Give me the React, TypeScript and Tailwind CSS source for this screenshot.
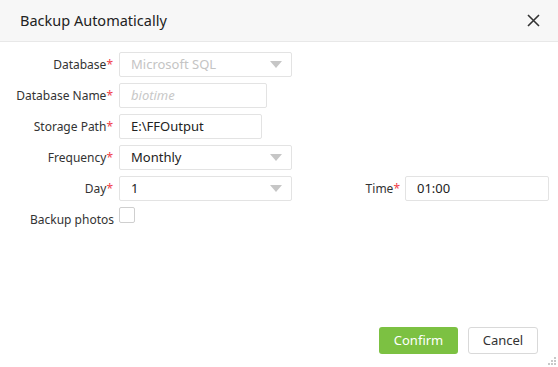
import React from "react";

const FONT = { fontFamily: '"Noto Sans", "Open Sans", Arial, sans-serif' };

function Label({ text, required = true, className = "" }: { text: string; required?: boolean; className?: string }) {
  return (
    <div className={`shrink-0 text-right text-[12px] text-[#333] ${className}`}>
      {text}
      {required && <span className="text-[#f0414a]">*</span>}
    </div>
  );
}

function Caret() {
  return (
    <svg width="12" height="7" viewBox="0 0 12 7" className="shrink-0">
      <path d="M0 0H12L6 7Z" fill="#c6c6c6" />
    </svg>
  );
}

function Select({ value, disabled = false }: { value: string; disabled?: boolean }) {
  return (
    <div className="flex h-[25px] w-[173px] items-center justify-between rounded-[2px] border border-[#e3e3e3] bg-white pl-[11px] pr-[9px]">
      <span className={`text-[13px] ${disabled ? "text-[#c4c4c4]" : "text-[#222]"}`}>{value}</span>
      <Caret />
    </div>
  );
}

function Input({ value, placeholder, width }: { value?: string; placeholder?: string; width: string }) {
  return (
    <div className={`flex h-[25px] ${width} items-center rounded-[2px] border border-[#e3e3e3] bg-white pl-[11px]`}>
      {value ? (
        <span className="text-[13px] text-[#222]">{value}</span>
      ) : (
        <span className="text-[13px] italic text-[#c8c8c8]">{placeholder}</span>
      )}
    </div>
  );
}

export default function App() {
  return (
    <div style={FONT} className="relative flex h-[367px] w-[558px] flex-col bg-white">
      <div className="flex h-[42px] shrink-0 items-center justify-between border-b border-[#e8e8e8] bg-[#f7f7f7] pl-[20px] pr-[18px]">
        <span className="text-[14.5px] text-[#222]">Backup Automatically</span>
        <svg width="13" height="13" viewBox="0 0 13 13">
          <path d="M1 1L12 12M12 1L1 12" stroke="#333" strokeWidth="1.6" />
        </svg>
      </div>

      <div className="flex flex-col gap-[6px] pt-[10px]">
        <div className="flex items-center">
          <Label text="Database" className="w-[119px] pr-[6px]" />
          <Select value="Microsoft SQL" disabled />
        </div>
        <div className="flex items-center">
          <Label text="Database Name" className="w-[119px] pr-[6px]" />
          <Input placeholder="biotime" width="w-[148px]" />
        </div>
        <div className="flex items-center">
          <Label text="Storage Path" className="w-[119px] pr-[6px]" />
          <Input value="E:\FFOutput" width="w-[143px]" />
        </div>
        <div className="flex items-center">
          <Label text="Frequency" className="w-[119px] pr-[6px]" />
          <Select value="Monthly" />
        </div>
        <div className="flex items-center">
          <Label text="Day" className="w-[119px] pr-[6px]" />
          <Select value="1" />
          <Label text="Time" className="w-[113px] pr-[5px]" />
          <Input value="01:00" width="w-[144px]" />
        </div>
        <div className="flex items-start">
          <Label text="Backup photos" required={false} className="w-[119px] pr-[5px] pt-[4px]" />
          <div className="h-[16px] w-[16px] rounded-[2px] border border-[#cfcfcf] bg-white" />
        </div>
      </div>

      <div className="flex-1" />

      <div className="flex justify-end gap-[10px] pb-[13px] pr-[20px]">
        <button className="h-[27px] w-[79px] rounded-[3px] bg-[#7cc142] text-[13px] text-white">Confirm</button>
        <button className="h-[27px] w-[70px] rounded-[3px] border border-[#d9d9d9] bg-white text-[13px] text-[#333]">Cancel</button>
      </div>

      <svg width="9" height="9" viewBox="0 0 9 9" className="absolute bottom-[1px] right-[1px]">
        <rect x="6" y="0" width="2" height="2" fill="#c8c8c8" />
        <rect x="3" y="3" width="2" height="2" fill="#c8c8c8" />
        <rect x="6" y="3" width="2" height="2" fill="#c8c8c8" />
        <rect x="0" y="6" width="2" height="2" fill="#c8c8c8" />
        <rect x="3" y="6" width="2" height="2" fill="#c8c8c8" />
        <rect x="6" y="6" width="2" height="2" fill="#c8c8c8" />
      </svg>
    </div>
  );
}
